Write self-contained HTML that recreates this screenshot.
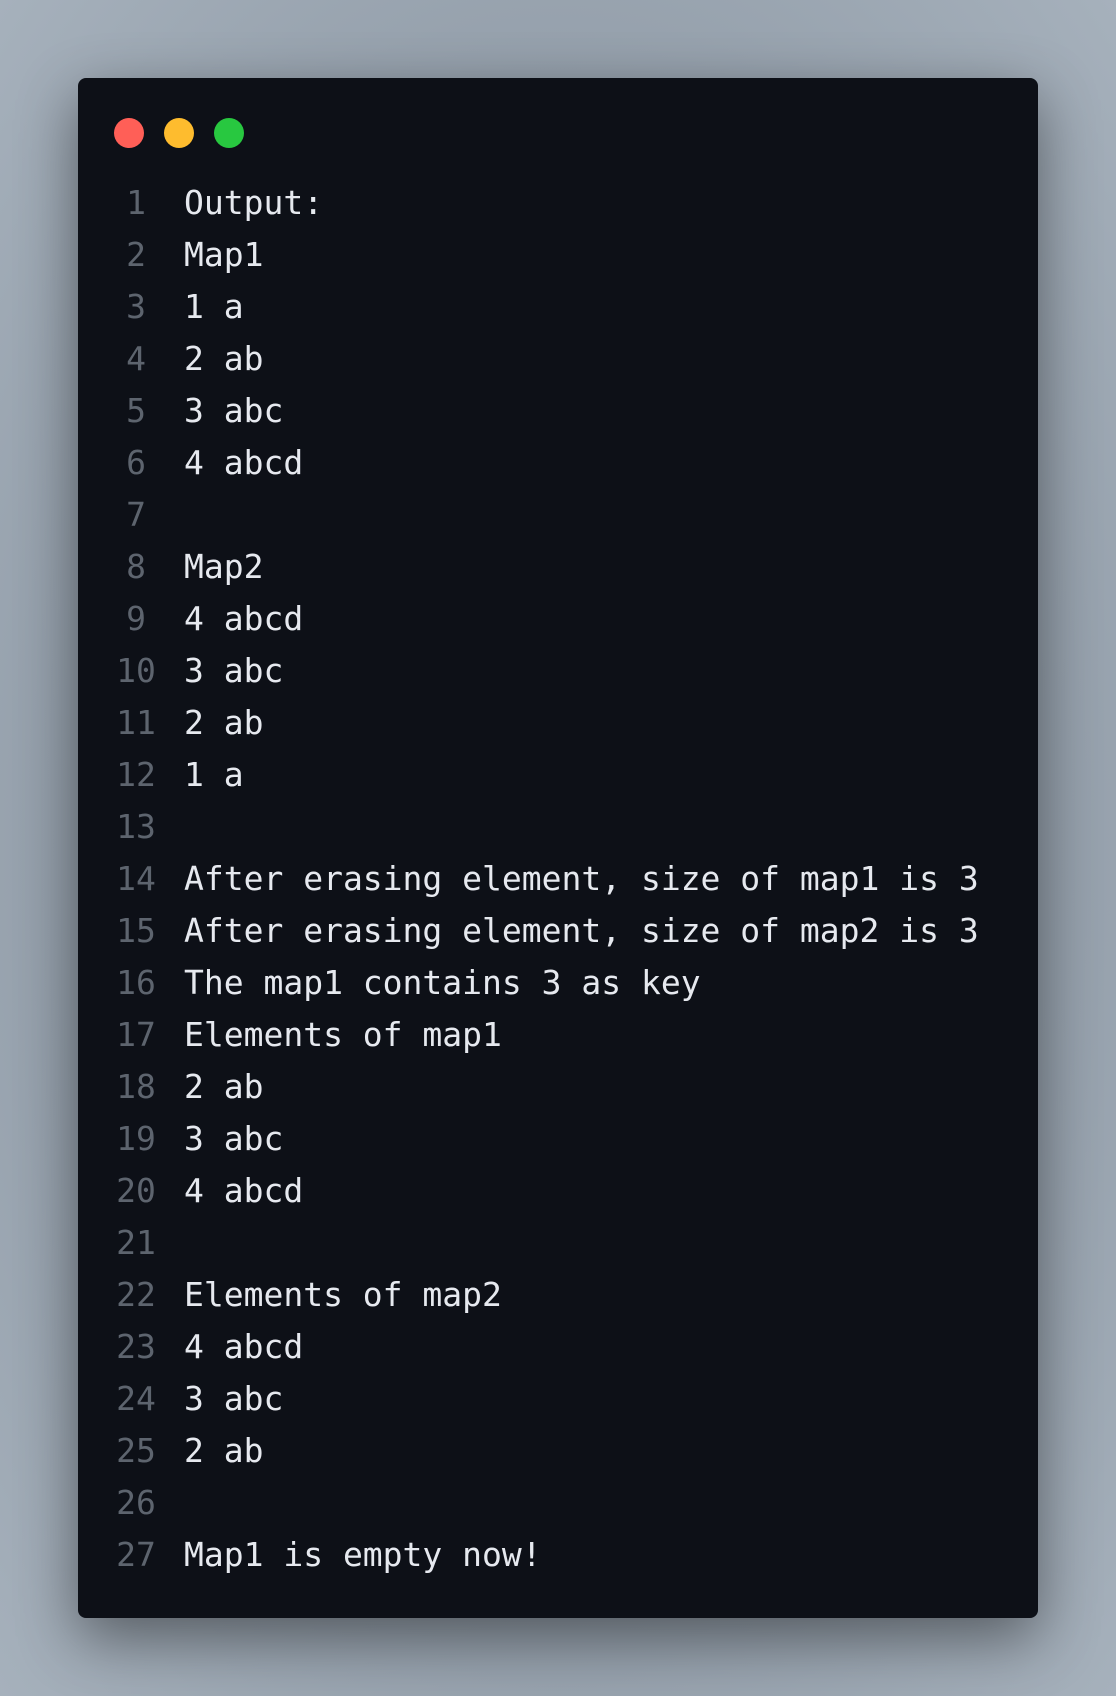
<!DOCTYPE html>
<html><head><meta charset="utf-8"><style>
html,body{margin:0;padding:0}
body{width:1116px;height:1696px;background:radial-gradient(ellipse at 50% 50%,#6f7a86 0%,#8e99a5 50%,#a6b1bc 100%);position:relative;overflow:hidden;font-family:"DejaVu Sans Mono","Liberation Mono",monospace}
.win{position:absolute;left:78px;top:78px;width:960px;height:1540px;background:#0d1017;border-radius:8px;box-shadow:0 20px 60px rgba(0,0,0,.45)}
.dot{position:absolute;top:40px;width:30px;height:30px;border-radius:50%}
.code{position:absolute;left:0;top:99px;font-size:33px;line-height:52px;white-space:pre;color:#e6e9ef}
.ln{display:inline-block;width:80px;margin-left:18px;text-align:center;color:#5d646e}
.tx{display:inline-block;margin-left:8px}
</style></head><body>
<div class="win">
<div class="dot" style="left:36px;background:#ff5f57"></div>
<div class="dot" style="left:86px;background:#febc2e"></div>
<div class="dot" style="left:136px;background:#28c840"></div>
<div class="code"><div><span class="ln">1</span><span class="tx">Output:</span></div><div><span class="ln">2</span><span class="tx">Map1</span></div><div><span class="ln">3</span><span class="tx">1 a</span></div><div><span class="ln">4</span><span class="tx">2 ab</span></div><div><span class="ln">5</span><span class="tx">3 abc</span></div><div><span class="ln">6</span><span class="tx">4 abcd</span></div><div><span class="ln">7</span><span class="tx"> </span></div><div><span class="ln">8</span><span class="tx">Map2</span></div><div><span class="ln">9</span><span class="tx">4 abcd</span></div><div><span class="ln">10</span><span class="tx">3 abc</span></div><div><span class="ln">11</span><span class="tx">2 ab</span></div><div><span class="ln">12</span><span class="tx">1 a</span></div><div><span class="ln">13</span><span class="tx"> </span></div><div><span class="ln">14</span><span class="tx">After erasing element, size of map1 is 3</span></div><div><span class="ln">15</span><span class="tx">After erasing element, size of map2 is 3</span></div><div><span class="ln">16</span><span class="tx">The map1 contains 3 as key</span></div><div><span class="ln">17</span><span class="tx">Elements of map1</span></div><div><span class="ln">18</span><span class="tx">2 ab</span></div><div><span class="ln">19</span><span class="tx">3 abc</span></div><div><span class="ln">20</span><span class="tx">4 abcd</span></div><div><span class="ln">21</span><span class="tx"> </span></div><div><span class="ln">22</span><span class="tx">Elements of map2</span></div><div><span class="ln">23</span><span class="tx">4 abcd</span></div><div><span class="ln">24</span><span class="tx">3 abc</span></div><div><span class="ln">25</span><span class="tx">2 ab</span></div><div><span class="ln">26</span><span class="tx"> </span></div><div><span class="ln">27</span><span class="tx">Map1 is empty now!</span></div></div>
</div>
</body></html>
